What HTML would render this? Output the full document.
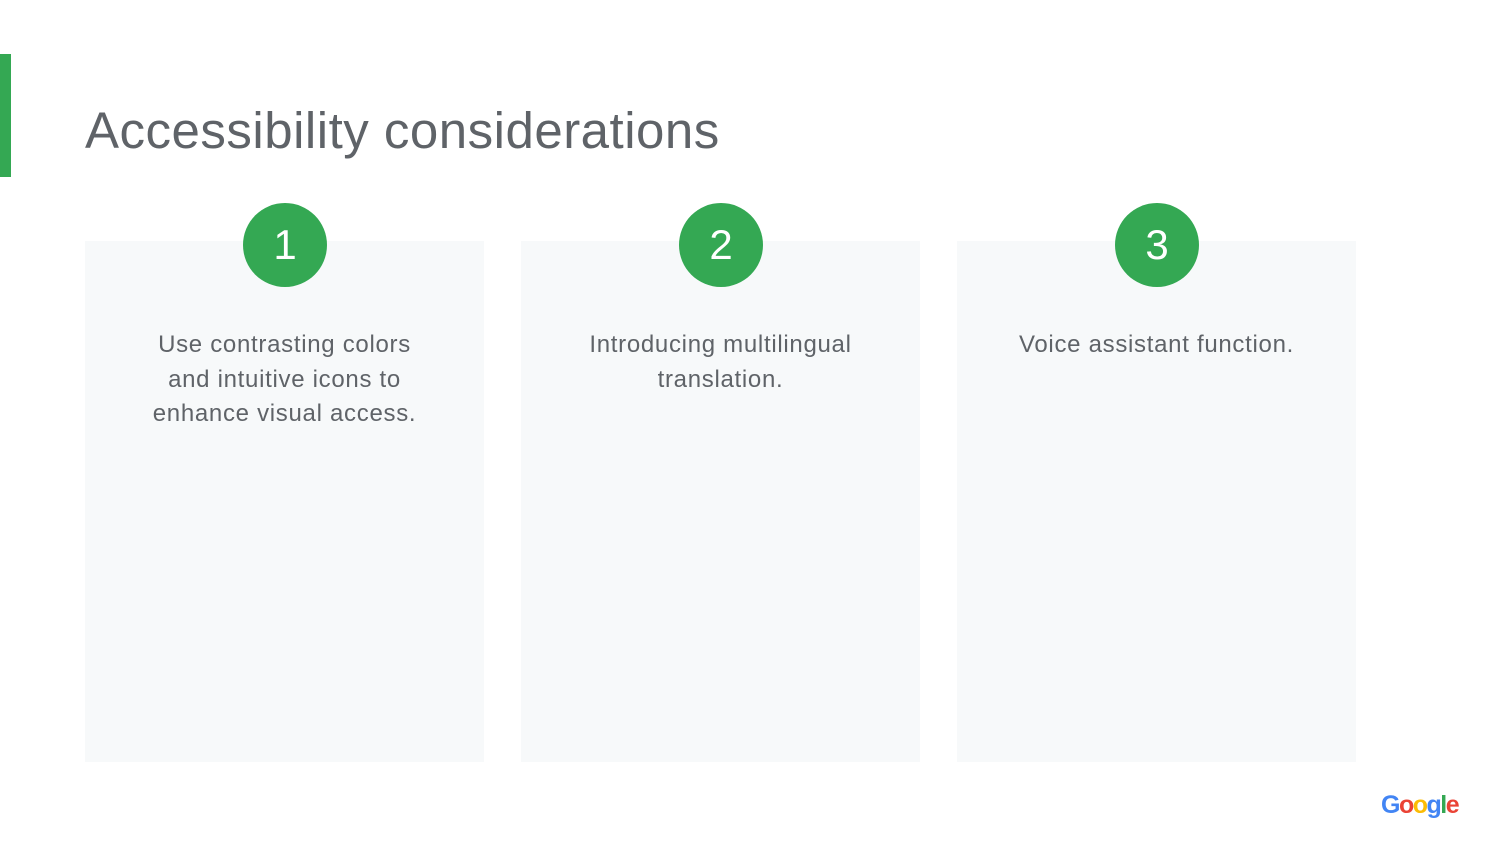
<!DOCTYPE html>
<html><head><style>
body{margin:0;width:1500px;height:844px;background:#fff;position:relative;overflow:hidden;font-family:"Liberation Sans",sans-serif}
.bar{position:absolute;left:0;top:54px;width:11px;height:123px;background:#34a853}
h1{position:absolute;left:85px;top:99px;margin:0;font-weight:400;font-size:51px;letter-spacing:0.5px;color:#5f6368;line-height:64px;white-space:nowrap}
.card{position:absolute;top:241px;width:399px;height:521px;background:#f7f9fa}
.c{position:absolute;top:203px;width:84px;height:84px;border-radius:50%;background:#34a853;color:#fff;font-size:42px;line-height:84px;text-align:center}
.t{position:absolute;top:328px;width:399px;text-align:center;font-size:24px;letter-spacing:0.7px;line-height:34.5px;color:#5f6368}
.g{position:absolute;left:1381px;top:791px;font-size:25px;letter-spacing:-1.5px;font-weight:bold}
</style></head><body>
<div class="bar"></div>
<h1>Accessibility considerations</h1>
<div class="card" style="left:85px"></div>
<div class="card" style="left:521px"></div>
<div class="card" style="left:957px"></div>
<div class="c" style="left:243px">1</div>
<div class="c" style="left:679px">2</div>
<div class="c" style="left:1115px">3</div>
<div class="t" style="left:85px">Use contrasting colors<br>and intuitive icons to<br>enhance visual access.</div>
<div class="t" style="left:521px">Introducing multilingual<br>translation.</div>
<div class="t" style="left:957px">Voice assistant function.</div>
<div class="g"><span style="color:#4285f4">G</span><span style="color:#ea4335">o</span><span style="color:#fbbc05">o</span><span style="color:#4285f4">g</span><span style="color:#34a853">l</span><span style="color:#ea4335">e</span></div>
</body></html>
